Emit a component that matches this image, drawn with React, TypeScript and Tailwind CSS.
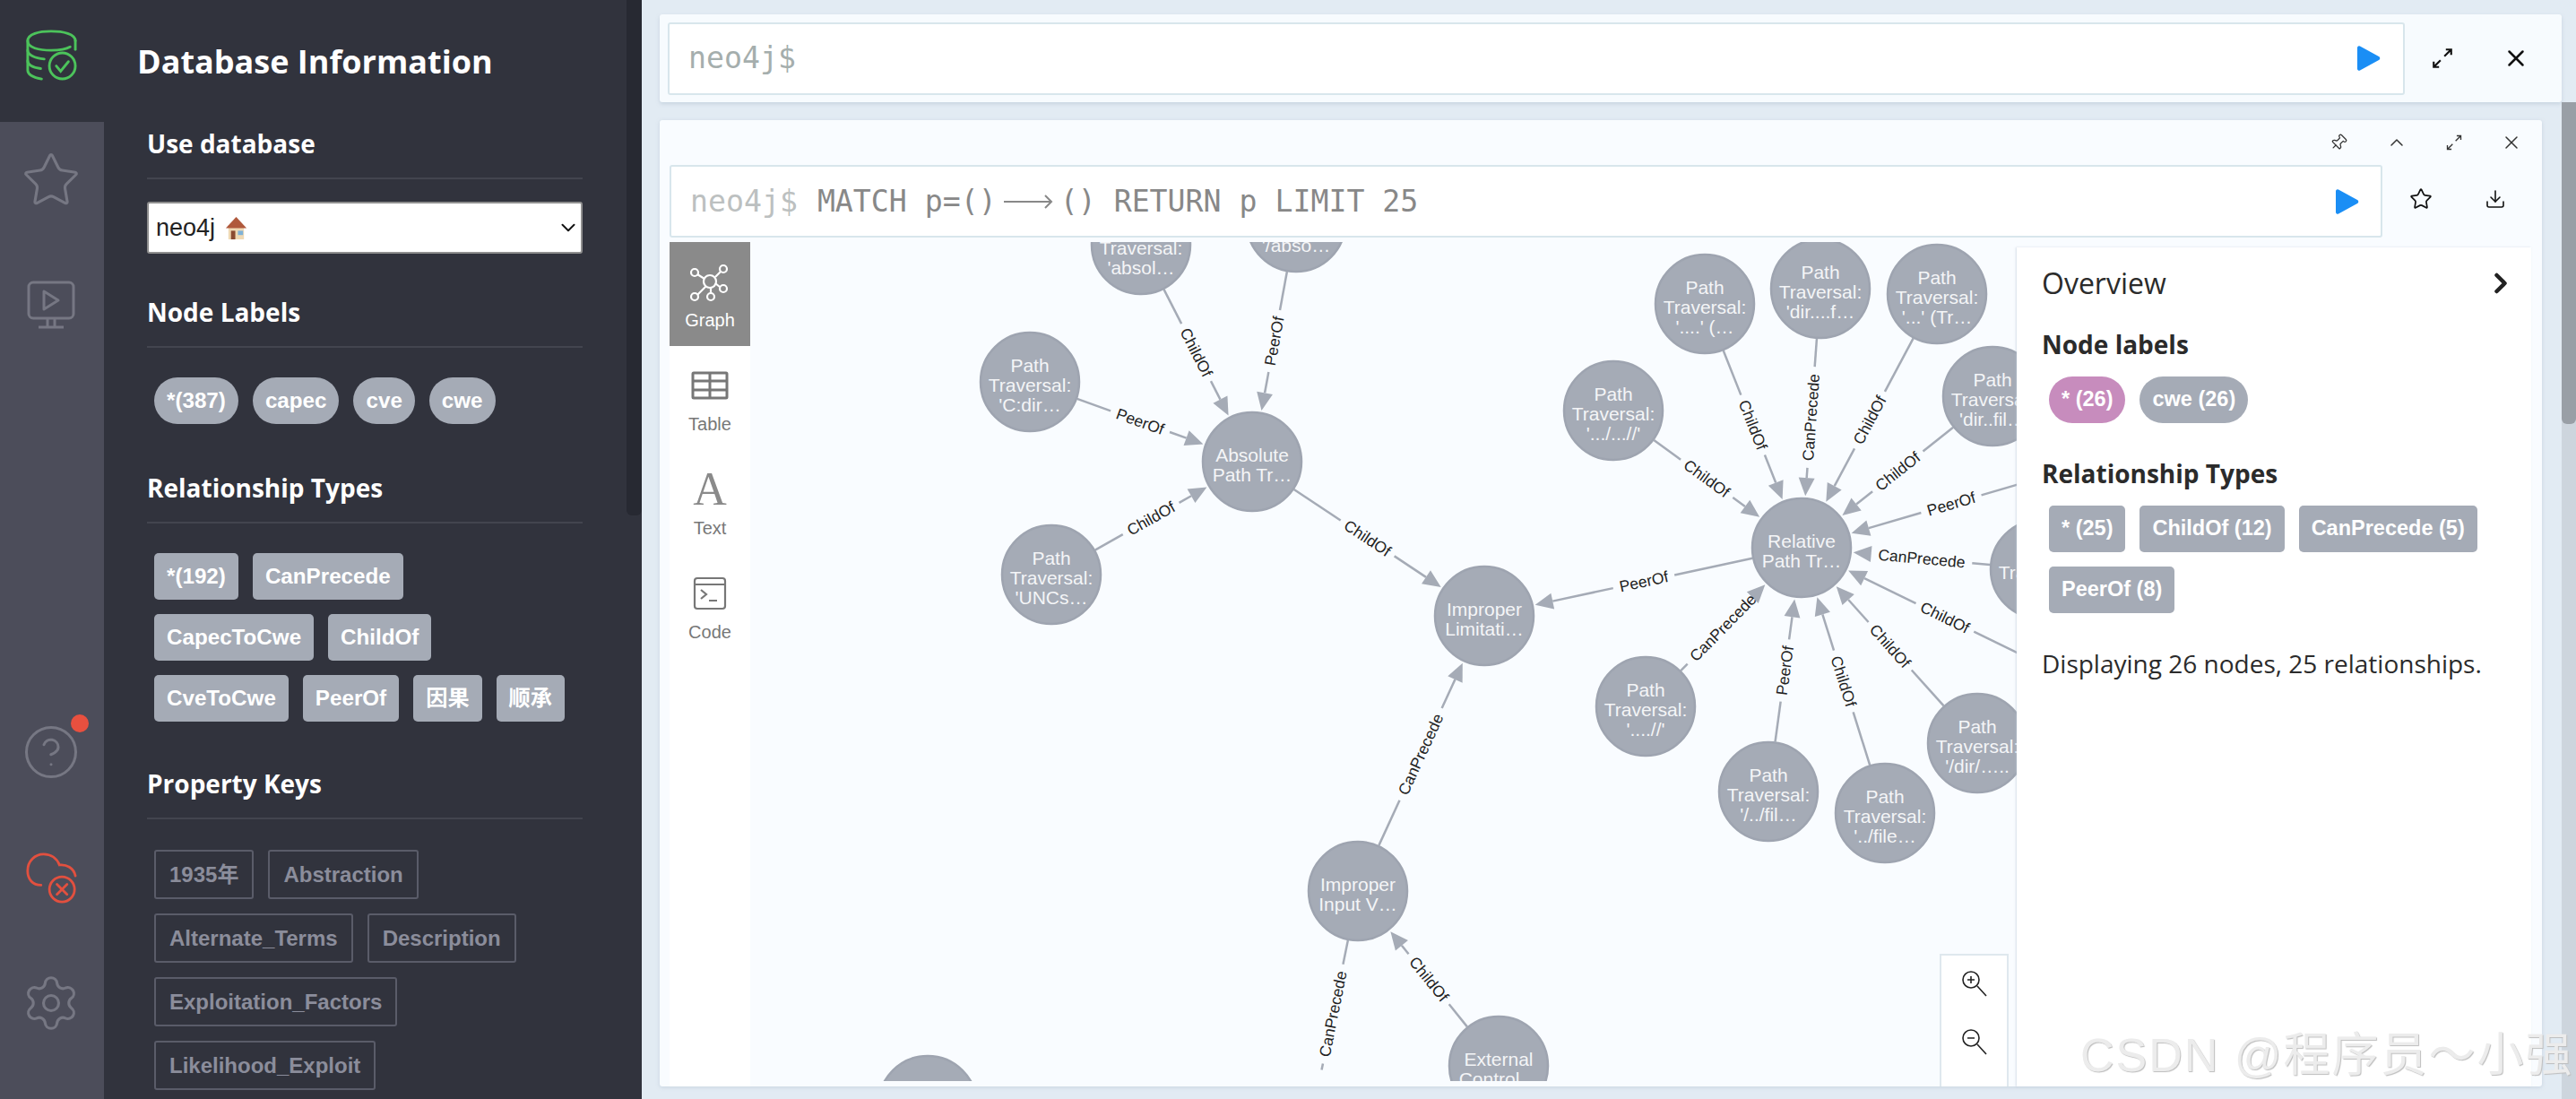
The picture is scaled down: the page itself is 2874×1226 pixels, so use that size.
import { Star, CircleHelp, Settings, X, ChevronUp, ChevronRight, ChevronDown, Pin, Download } from 'lucide-react';

const R = 56;

type Pt = [number, number];

const nodes: { c: Pt; lines: string[] }[] = [
  { c: [1272, 273], lines: ['Path', 'Traversal:', "'absol…"] },
  { c: [1445, 248], lines: ['Path', 'Traversal:', "'/abso…"] },
  { c: [1148, 426], lines: ['Path', 'Traversal:', "'C:dir…"] },
  { c: [1172, 641], lines: ['Path', 'Traversal:', "'UNCs…"] },
  { c: [1396, 515], lines: ['Absolute', 'Path Tr…'] },
  { c: [1655, 687], lines: ['Improper', 'Limitati…'] },
  { c: [1514, 994], lines: ['Improper', 'Input V…'] },
  { c: [1671, 1189], lines: ['External', 'Control…'] },
  { c: [1034, 1233], lines: ['Path'] },
  { c: [2009, 611], lines: ['Relative', 'Path Tr…'] },
  { c: [1799, 458], lines: ['Path', 'Traversal:', "'.../...//'"] },
  { c: [1901, 339], lines: ['Path', 'Traversal:', "'....' (…"] },
  { c: [2030, 322], lines: ['Path', 'Traversal:', "'dir....f…"] },
  { c: [2160, 328], lines: ['Path', 'Traversal:', "'...' (Tr…"] },
  { c: [2222, 442], lines: ['Path', 'Traversal:', "'dir..fil…"] },
  { c: [2275, 635], lines: ['Path', 'Traversal:', "'dir…"] },
  { c: [2205, 829], lines: ['Path', 'Traversal:', "'/dir/….."] },
  { c: [2102, 907], lines: ['Path', 'Traversal:', "'../file…"] },
  { c: [1972, 883], lines: ['Path', 'Traversal:', "'/../fil…"] },
  { c: [1835, 788], lines: ['Path', 'Traversal:', "'....//'"] },
];

const edges: { a: Pt; b: Pt; label: string; noHead?: boolean }[] = [
  { a: [1272, 273], b: [1396, 515], label: 'ChildOf' },
  { a: [1445, 248], b: [1396, 515], label: 'PeerOf' },
  { a: [1148, 426], b: [1396, 515], label: 'PeerOf' },
  { a: [1172, 641], b: [1396, 515], label: 'ChildOf' },
  { a: [1396, 515], b: [1655, 687], label: 'ChildOf' },
  { a: [2009, 611], b: [1655, 687], label: 'PeerOf' },
  { a: [1514, 994], b: [1655, 687], label: 'CanPrecede' },
  { a: [1671, 1189], b: [1514, 994], label: 'ChildOf' },
  { a: [1514, 994], b: [1458, 1270], label: 'CanPrecede', noHead: true },
  { a: [1799, 458], b: [2009, 611], label: 'ChildOf' },
  { a: [1901, 339], b: [2009, 611], label: 'ChildOf' },
  { a: [2030, 322], b: [2009, 611], label: 'CanPrecede' },
  { a: [2160, 328], b: [2009, 611], label: 'ChildOf' },
  { a: [2222, 442], b: [2009, 611], label: 'ChildOf' },
  { a: [2341, 514], b: [2009, 611], label: 'PeerOf' },
  { a: [2275, 635], b: [2009, 611], label: 'CanPrecede' },
  { a: [2327, 766], b: [2009, 611], label: 'ChildOf' },
  { a: [2205, 829], b: [2009, 611], label: 'ChildOf' },
  { a: [2102, 907], b: [2009, 611], label: 'ChildOf' },
  { a: [1972, 883], b: [2009, 611], label: 'PeerOf' },
  { a: [1835, 788], b: [2009, 611], label: 'CanPrecede' },
];

const labelWidth: Record<string, number> = { ChildOf: 54, PeerOf: 52, CanPrecede: 95 };

function Edge({ a, b, label, noHead }: { a: Pt; b: Pt; label: string; noHead?: boolean }) {
  const dx = b[0] - a[0];
  const dy = b[1] - a[1];
  const len = Math.hypot(dx, dy);
  const ux = dx / len;
  const uy = dy / len;
  const sx = a[0] + ux * R;
  const sy = a[1] + uy * R;
  const ex = b[0] - ux * (R + 2);
  const ey = b[1] - uy * (R + 2);
  const mx = (sx + ex) / 2;
  const my = (sy + ey) / 2;
  const gap = labelWidth[label] / 2 + 9;
  const bx = ex - ux * 20;
  const by = ey - uy * 20;
  let angle = (Math.atan2(dy, dx) * 180) / Math.PI;
  if (angle > 90) angle -= 180;
  if (angle < -90) angle += 180;
  return (
    <g>
      <line x1={sx} y1={sy} x2={mx - ux * gap} y2={my - uy * gap} stroke="#a5abb6" strokeWidth="2.5" />
      <line x1={mx + ux * gap} y1={my + uy * gap} x2={bx} y2={by} stroke="#a5abb6" strokeWidth="2.5" />
      {!noHead && (
        <polygon
          points={`${ex},${ey} ${bx - uy * 9},${by + ux * 9} ${bx + uy * 9},${by - ux * 9}`}
          fill="#a5abb6"
        />
      )}
      <text
        x={mx}
        y={my}
        transform={`rotate(${angle} ${mx} ${my})`}
        textAnchor="middle"
        dominantBaseline="central"
        fontSize="17.5"
        fill="#222"
      >
        {label}
      </text>
    </g>
  );
}

function GraphCanvas() {
  return (
    <svg
      width="1988"
      height="936"
      viewBox="836 270 1988 936"
      className="block font-['Liberation_Sans',Arial,sans-serif]"
    >
      {edges.map((e, i) => (
        <Edge key={i} {...e} />
      ))}
      {nodes.map((n, i) => (
        <g key={i}>
          <circle cx={n.c[0]} cy={n.c[1]} r={R - 1} fill="#a5abb6" stroke="#9ea4b0" strokeWidth="2.5" />
          {n.lines.map((l, j) => (
            <text
              key={j}
              x={n.c[0]}
              y={n.c[1] + 3 + (j - (n.lines.length - 1) / 2) * 22}
              textAnchor="middle"
              dominantBaseline="central"
              fontSize="21"
              fill="#f4f5f7"
            >
              {l}
            </text>
          ))}
        </g>
      ))}
    </svg>
  );
}

function ExpandIcon({ size, stroke = '#111', width = 2 }: { size: number; stroke?: string; width?: number }) {
  return (
    <svg width={size} height={size} viewBox="0 0 24 24" fill="none" stroke={stroke} strokeWidth={width}>
      <path d="M14 10 21 3M15.5 3H21V8.5M10 14 3 21M3 15.5V21H8.5" />
    </svg>
  );
}

function PlayIcon() {
  return (
    <svg width="26" height="30" viewBox="0 0 26 30" className="shrink-0">
      <path d="M3 1.5 24 13a2.2 2.2 0 0 1 0 4L3 28.5a2 2 0 0 1-3-1.7V3.2a2 2 0 0 1 3-1.7Z" fill="#1a8ef5" />
    </svg>
  );
}

function DbIcon() {
  return (
    <svg width="58" height="58" viewBox="0 0 60 60" fill="none" stroke="#4cc35b" strokeWidth="3" strokeLinecap="round">
      <path d="M58 14C58 6 44 3 30 3S3 6 3 14s13 11 27 11c9 0 17-1 22-4" />
      <path d="M3 14v34c0 5 6 8 16 10" />
      <path d="M3 25c0 5 8 9 19 10" />
      <path d="M3 37c0 5 7 8 15 9" />
      <path d="M58 14v10" />
      <circle cx="43" cy="43" r="15" />
      <path d="m36 43 5 6 9-11" />
    </svg>
  );
}

function MonitorIcon() {
  return (
    <svg width="54" height="54" viewBox="0 0 54 54" fill="none" stroke="#767783" strokeWidth="3" strokeLinejoin="round">
      <rect x="2" y="2" width="50" height="40" rx="5" />
      <path d="M19 12v20l16-10Z" />
      <path d="M23 42v9M31 42v9M13 52h28" />
    </svg>
  );
}

function CloudIcon() {
  return (
    <svg width="58" height="58" viewBox="0 0 60 62" fill="none" stroke="#e2503f" strokeWidth="3" strokeLinecap="round">
      <path d="M18 40C8 40 2 33 2 23 2 11 11 3 21 3c9 0 16 5 19 13 8-1 17 3 19 13" />
      <circle cx="43" cy="45" r="15" />
      <path d="m37 39 12 12M49 39 37 51" />
    </svg>
  );
}

function GraphTabIcon() {
  return (
    <svg width="48" height="48" viewBox="-24 -24 48 48" fill="none" stroke="#fff" strokeWidth="2.2">
      <path d="M-6-3-14-8M6-5 12-11M6 2 11 6M1 7V13M-4 5-14 15" />
      <circle cx="0" cy="0" r="7" />
      <circle cx="-17" cy="-10" r="4" />
      <circle cx="15" cy="-14" r="4" />
      <circle cx="15" cy="8" r="4" />
      <circle cx="1" cy="17" r="4" />
      <circle cx="-17" cy="17" r="4" />
    </svg>
  );
}

function TableTabIcon() {
  return (
    <svg width="42" height="32" viewBox="0 0 42 32" fill="none" stroke="#777" strokeWidth="3">
      <rect x="2" y="2" width="38" height="28" rx="1" />
      <path d="M2 11h38M2 21h38M21 2v28" />
    </svg>
  );
}

function CodeTabIcon() {
  return (
    <svg width="38" height="38" viewBox="0 0 38 38" fill="none" stroke="#777" strokeWidth="2.2">
      <rect x="2" y="2" width="34" height="34" rx="3" />
      <path d="M2 9h34M9 15l6 5-6 5M18 27h9" />
    </svg>
  );
}

function HouseIcon() {
  return (
    <svg width="27" height="27" viewBox="0 0 26 28" className="ml-[10px]">
      <path d="M4 13h18v14H4Z" fill="#efd9b4" />
      <path d="M13 1 1 14h24Z" fill="#b0593c" />
      <path d="M7 17h5v10H7Z" fill="#8a4b32" />
      <path d="M15 17h6v5h-6Z" fill="#7fb2d8" />
    </svg>
  );
}

function QueryArrow() {
  return (
    <span className="flex w-[71px] justify-center">
      <svg width="56" height="20" viewBox="0 0 56 20" fill="none" stroke="#888" strokeWidth="2">
        <path d="M1 10h53M47 3l7 7-7 7" />
      </svg>
    </span>
  );
}

function Heading({ children }: { children: string }) {
  return (
    <div className="border-b-2 border-[#43454f] pb-[18px]">
      <h4 className="h-[40px] font-['Open_Sans',sans-serif] text-[28px] font-bold leading-[40px] text-white">
        {children}
      </h4>
    </div>
  );
}

function Tags({ items, className }: { items: string[]; className: string }) {
  return (
    <div className="ml-2 flex w-[468px] flex-wrap gap-x-4 gap-y-4">
      {items.map((t) => (
        <span key={t} className={className}>
          {t}
        </span>
      ))}
    </div>
  );
}

const solidTag =
  "flex h-[52px] items-center px-[14px] font-['Liberation_Sans','Noto_Sans_CJK_SC',sans-serif] text-[24.2px] font-bold text-white bg-[#a5abb6]";

function Drawer() {
  return (
    <div className="relative h-full w-[600px] shrink-0 overflow-hidden bg-[#31333d]">
      <div className="absolute right-0 top-0 h-[575px] w-[17px] rounded-b-md bg-[#272932]" />
      <h3 className="pl-[37px] pt-[47px] font-['Open_Sans',sans-serif] text-[36px] font-bold leading-[44px] text-white">
        Database Information
      </h3>
      <div className="ml-[48px] w-[486px] pt-[49px]">
        <Heading>Use database</Heading>
        <div className="mt-[25px] flex h-[58px] items-center rounded-[3px] border-2 border-[#8f8f8f] bg-white pl-2 pr-[1px] font-['Liberation_Sans',sans-serif] text-[27px] text-[#222]">
          neo4j
          <HouseIcon />
          <ChevronDown size={26} strokeWidth={1.8} className="ml-auto text-[#111]" />
        </div>

        <div className="mt-[45px]">
          <Heading>Node Labels</Heading>
        </div>
        <div className="mt-[33px]">
          <Tags items={['*(387)', 'capec', 'cve', 'cwe']} className={`${solidTag} rounded-[26px]`} />
        </div>

        <div className="mt-[51px]">
          <Heading>Relationship Types</Heading>
        </div>
        <div className="mt-[33px]">
          <Tags
            items={['*(192)', 'CanPrecede', 'CapecToCwe', 'ChildOf', 'CveToCwe', 'PeerOf', '因果', '顺承']}
            className={`${solidTag} rounded-[5px]`}
          />
        </div>

        <div className="mt-[49px]">
          <Heading>Property Keys</Heading>
        </div>
        <div className="mt-[34px]">
          <Tags
            items={['1935年', 'Abstraction', 'Alternate_Terms', 'Description', 'Exploitation_Factors', 'Likelihood_Exploit']}
            className="flex h-[55px] items-center rounded-[3px] border-2 border-[#5a5c69] px-[15px] font-['Liberation_Sans','Noto_Sans_CJK_SC',sans-serif] text-[24px] font-bold text-[#8b8d9b]"
          />
        </div>
      </div>
    </div>
  );
}

function Rail() {
  return (
    <div className="flex h-full w-[116px] shrink-0 flex-col bg-[#4c4d5a] pr-[3px]">
      <div className="-mr-[3px] flex h-[136px] justify-center bg-[#31333d] pr-[3px] pt-[32px]">
        <DbIcon />
      </div>
      <div className="flex h-[130px] items-center justify-center">
        <Star size={68} strokeWidth={1.1} className="text-[#767783]" />
      </div>
      <div className="flex h-[148px] items-center justify-center">
        <MonitorIcon />
      </div>
      <div className="mt-auto pb-[37px]">
        <div className="flex h-[140px] items-center justify-center">
          <div className="relative">
            <CircleHelp size={66} strokeWidth={1.1} className="text-[#767783]" />
            <span className="absolute -right-[9px] -top-[9px] h-[20px] w-[20px] rounded-full bg-[#e8503f]" />
          </div>
        </div>
        <div className="flex h-[140px] items-center justify-center">
          <CloudIcon />
        </div>
        <div className="flex h-[140px] items-center justify-center">
          <Settings size={68} strokeWidth={1.1} className="text-[#767783]" />
        </div>
      </div>
    </div>
  );
}

const monoText = "font-['DejaVu_Sans_Mono',monospace] text-[33.2px]";

function Tab({ label, active, icon }: { label: string; active?: boolean; icon: React.ReactNode }) {
  return (
    <div className={`flex h-[116px] flex-col items-center pt-[16px] ${active ? 'bg-[#8a8a8a] text-white' : 'text-[#777]'}`}>
      <div className="flex h-[56px] items-center justify-center">{icon}</div>
      <span className="h-[28px] pt-[1px] font-['Liberation_Sans',sans-serif] text-[20px] leading-[28px]">{label}</span>
    </div>
  );
}

function Overview() {
  const tag =
    "flex h-[52px] items-center bg-[#a5abb6] px-[14px] font-['Liberation_Sans',sans-serif] text-[23.5px] font-bold text-white";
  return (
    <div className="absolute bottom-[-6px] right-0 top-[6px] w-[574px] bg-white pl-[28px] font-['Open_Sans',sans-serif] shadow-[-1px_0_2px_rgba(180,195,210,0.5)]">
      <div className="flex h-[80px] items-center justify-between pr-[16px]">
        <span className="text-[32px] text-[#2b2b2b]">Overview</span>
        <ChevronRight size={36} strokeWidth={3} className="text-[#222]" />
      </div>
      <h4 className="mt-[8px] text-[28px] font-bold leading-[40px] text-[#2b2b2b]">Node labels</h4>
      <div className="ml-[8px] mt-[16px] flex gap-4">
        <span className={`${tag} rounded-[26px] !bg-[#c78cbd]`}>* (26)</span>
        <span className={`${tag} rounded-[26px]`}>cwe (26)</span>
      </div>
      <h4 className="mt-[36px] text-[28px] font-bold leading-[40px] text-[#2b2b2b]">Relationship Types</h4>
      <div className="ml-[8px] mt-[16px] flex w-[500px] flex-wrap gap-x-4 gap-y-4">
        <span className={`${tag} rounded-[5px]`}>* (25)</span>
        <span className={`${tag} rounded-[5px]`}>ChildOf (12)</span>
        <span className={`${tag} rounded-[5px]`}>CanPrecede (5)</span>
        <span className={`${tag} rounded-[5px]`}>PeerOf (8)</span>
      </div>
      <p className="mt-[36px] text-[28px] leading-[40px] text-[#2b2b2b]">Displaying 26 nodes, 25 relationships.</p>
    </div>
  );
}

export default function App() {
  return (
    <div className="relative flex h-[1226px] w-[2874px] overflow-hidden bg-[#e2ebf3]">
      <Rail />
      <Drawer />

      <div className="flex min-w-0 flex-1 flex-col pl-[20px]">
        {/* top editor */}
        <div className="mt-4 flex h-[98px] w-[2122px] shrink-0 items-center rounded-[3px] bg-[#f7fbfe] pl-[9px] shadow-[0_2px_4px_rgba(150,170,190,0.35)]">
          <div className={`flex h-[81px] w-[1938px] items-center justify-between rounded-[3px] border-2 border-[#d8e6ec] bg-white pl-[21px] pr-[25px] text-[#a5aead] ${monoText}`}>
            <span>neo4j$</span>
            <PlayIcon />
          </div>
          <div className="flex w-[83px] justify-center">
            <ExpandIcon size={26} />
          </div>
          <div className="flex w-[83px] justify-center pr-[2px]">
            <X size={30} strokeWidth={2} className="text-[#111]" />
          </div>
        </div>

        {/* result frame */}
        <div className="mt-5 flex h-[1078px] w-[2100px] shrink-0 flex-col rounded-[3px] bg-[#f9fcff] pl-[11px] pr-[12px] shadow-[0_1px_4px_rgba(150,170,190,0.35)]">
          <div className="-mr-[10px] flex h-[50px] shrink-0 items-center justify-end">
            <div className="flex w-[64px] justify-center pr-[2px]">
              <Pin size={20} strokeWidth={1.5} className="rotate-45 text-[#333]" />
            </div>
            <div className="flex w-[64px] justify-center">
              <ChevronUp size={24} strokeWidth={1.5} className="text-[#333]" />
            </div>
            <div className="flex w-[64px] justify-center">
              <ExpandIcon size={20} stroke="#333" width={1.6} />
            </div>
            <div className="flex w-[64px] justify-center">
              <X size={24} strokeWidth={1.5} className="text-[#333]" />
            </div>
          </div>

          <div className="flex h-[81px] shrink-0">
            <div className={`flex w-[1914px] items-center rounded-[3px] border-2 border-[#d8e6ec] bg-white pl-[21px] pr-[24px] text-[#888] ${monoText}`}>
              <span className="text-[#bcc0c0]">neo4j$</span>
              <span className="ml-[22px] whitespace-pre">MATCH p=()</span>
              <QueryArrow />
              <span className="whitespace-pre">() RETURN p LIMIT 25</span>
              <span className="ml-auto">
                <PlayIcon />
              </span>
            </div>
            <div className="flex w-[83px] items-center justify-center pb-[6px] pl-[3px]">
              <Star size={26} strokeWidth={1.6} className="text-[#111]" />
            </div>
            <div className="flex w-[83px] items-center justify-center pb-[6px] pl-[3px]">
              <Download size={24} strokeWidth={1.6} className="text-[#111]" />
            </div>
          </div>

          <div className="mt-[5px] flex h-[936px] shrink-0">
            <div className="-mb-[6px] w-[90px] shrink-0 bg-white">
              <Tab label="Graph" active icon={<GraphTabIcon />} />
              <Tab label="Table" icon={<TableTabIcon />} />
              <Tab
                label="Text"
                icon={<span className="font-['Liberation_Serif',serif] text-[52px] leading-none text-[#8a8a8a]">A</span>}
              />
              <Tab label="Code" icon={<CodeTabIcon />} />
            </div>
            <div className="relative min-w-0 flex-1 overflow-visible">
              <div className="h-full overflow-hidden">
                <GraphCanvas />
              </div>
              <div className="absolute bottom-[-6px] left-[1327px] top-[794px] w-[77px] border-x-2 border-t-2 border-[#dfe8ee] bg-white">
                <div className="flex h-[49px] items-end justify-center pb-[3px]">
                  <ZoomIcon plus />
                </div>
                <div className="flex h-[65px] items-end justify-center pb-[3px]">
                  <ZoomIcon />
                </div>
              </div>
              <Overview />
            </div>
          </div>
        </div>
      </div>

      {/* main scrollbar */}
      <div className="absolute bottom-0 right-0 top-[114px] w-[16px] bg-[#cdd5dd]">
        <div className="h-[359px] rounded-b-md bg-[#999fa6]" />
      </div>

      {/* watermark */}
      <div className="pointer-events-none absolute left-[2321px] top-[1143px] whitespace-nowrap font-['Liberation_Sans','Noto_Sans_CJK_SC',sans-serif] text-[52px] leading-[68px] tracking-[2px] text-[#ececec] [text-shadow:1px_1px_1px_#bdbdbd]">
        CSDN @程序员～小强
      </div>
    </div>
  );
}

function ZoomIcon({ plus }: { plus?: boolean }) {
  return (
    <svg width="30" height="30" viewBox="0 0 30 30" fill="none" stroke="#222" strokeWidth="1.6">
      <circle cx="11" cy="11" r="9" />
      <path d="M7 11h8M18 18l10 11" />
      {plus && <path d="M11 7v8" />}
    </svg>
  );
}
